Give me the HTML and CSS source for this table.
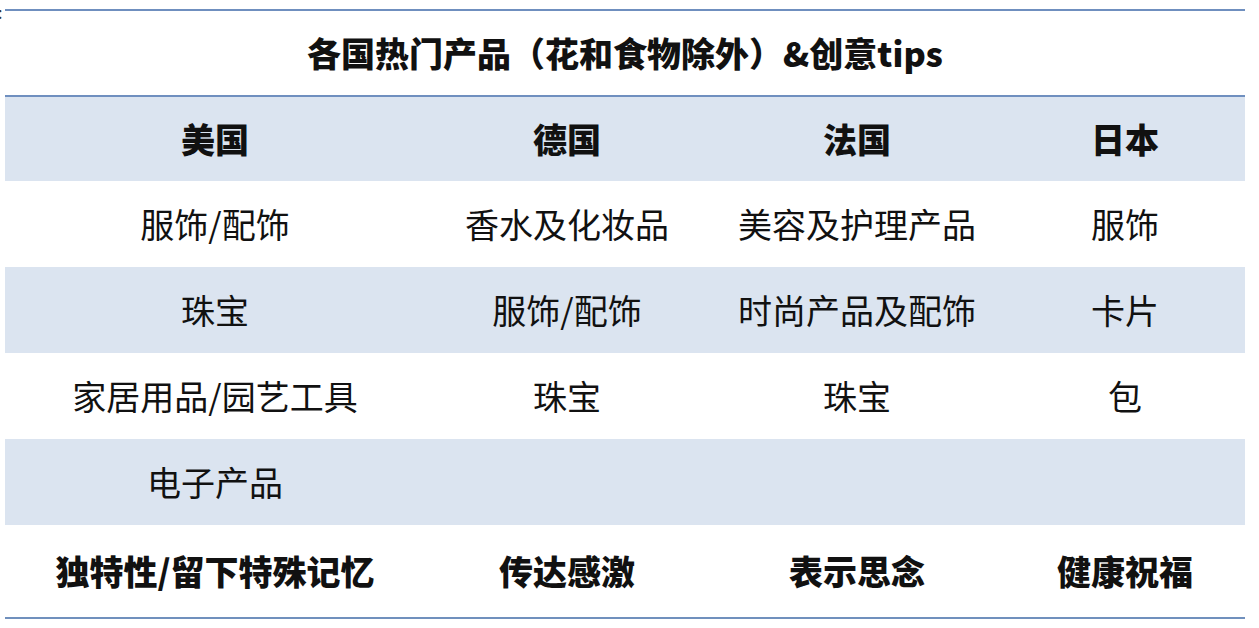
FILE: index.html
```html
<!DOCTYPE html>
<html lang="zh-CN">
<head>
<meta charset="utf-8">
<title>各国热门产品</title>
<link rel="stylesheet" href="styles.css">
</head>
<body>
<span class="mark">:</span>
<table class="tbl">
  <colgroup>
    <col class="c1"><col class="c2"><col class="c3"><col class="c4">
  </colgroup>
  <tr class="title-row"><td colspan="4">各国热门产品（花和食物除外）&amp;创意tips</td></tr>
  <tr class="band head"><td>美国</td><td>德国</td><td>法国</td><td>日本</td></tr>
  <tr><td>服饰/配饰</td><td>香水及化妆品</td><td>美容及护理产品</td><td>服饰</td></tr>
  <tr class="band"><td>珠宝</td><td>服饰/配饰</td><td>时尚产品及配饰</td><td>卡片</td></tr>
  <tr><td>家居用品/园艺工具</td><td>珠宝</td><td>珠宝</td><td>包</td></tr>
  <tr class="band"><td>电子产品</td><td></td><td></td><td></td></tr>
  <tr class="tips"><td>独特性/留下特殊记忆</td><td>传达感激</td><td>表示思念</td><td>健康祝福</td></tr>
</table>
</body>
</html>
```
FILE: styles.css
```css
html, body {
  margin: 0;
  padding: 0;
  background: #ffffff;
}
body {
  position: relative;
  font-family: "Noto Sans CJK SC", "Noto Sans", sans-serif;
  color: #111;
  padding: 9px 0 0 5px;
}
.mark {
  position: absolute;
  left: -2px;
  top: 2px;
  font-size: 16px;
  line-height: 20px;
  color: #333;
}
.tbl {
  width: 1240px;
  border-collapse: collapse;
  table-layout: fixed;
  border-top: 2px solid #6f8fbf;
  border-bottom: 2px solid #7090bd;
}
.c1 { width: 420px; }
.c2 { width: 284px; }
.c3 { width: 296px; }
.c4 { width: 240px; }
.tbl td {
  padding: 0;
  height: 86px;
  text-align: center;
  vertical-align: middle;
  font-size: 34px;
  line-height: 40px;
  white-space: nowrap;
}
.title-row td {
  height: 84px;
  font-weight: 900;
}
.band td {
  background: #dbe4f0;
}
.head td {
  border-top: 2px solid #6f8fbf;
  height: 84px;
  font-weight: 900;
}
.tips td {
  height: 92px;
  font-weight: 900;
}
```
